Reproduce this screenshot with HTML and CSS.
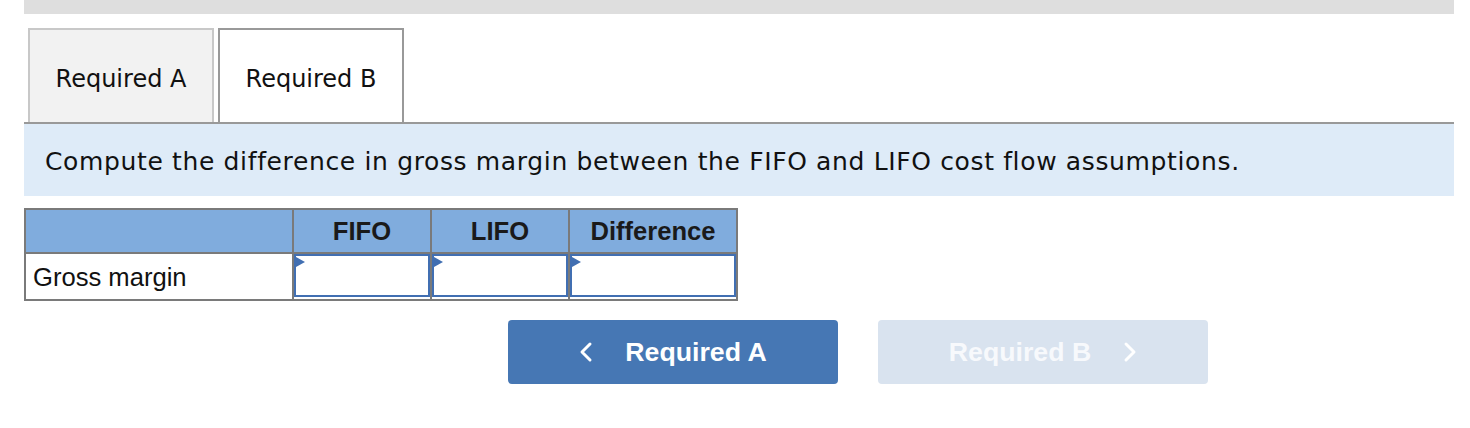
FILE: index.html
```html
<!DOCTYPE html>
<html lang="en">
<head>
<meta charset="utf-8">
<title>Required B</title>
<link rel="stylesheet" href="styles.css">
</head>
<body>
<div class="page">
  <div class="topbar"></div>

  <div class="tabs">
    <div class="tab">Required A</div>
    <div class="tab active">Required B</div>
  </div>

  <div class="prompt">Compute the difference in gross margin between the FIFO and LIFO cost flow assumptions.</div>

  <table class="grid">
    <colgroup>
      <col class="c-label">
      <col class="c-val">
      <col class="c-val">
      <col class="c-diff">
    </colgroup>
    <thead>
      <tr>
        <th></th>
        <th>FIFO</th>
        <th>LIFO</th>
        <th>Difference</th>
      </tr>
    </thead>
    <tbody>
      <tr>
        <td class="label">Gross margin</td>
        <td class="entry"><div class="field"></div></td>
        <td class="entry"><div class="field"></div></td>
        <td class="entry"><div class="field"></div></td>
      </tr>
    </tbody>
  </table>

  <div class="nav">
    <button class="btn primary" type="button">
      <svg class="chev" width="14" height="22" viewBox="0 0 14 22"><polyline points="11,3 3,11 11,19" fill="none" stroke="#fff" stroke-width="3" stroke-linecap="round" stroke-linejoin="round"/></svg>
      <span>Required A</span>
    </button>
    <button class="btn disabled" type="button">
      <span>Required B</span>
      <svg class="chev" width="14" height="22" viewBox="0 0 14 22"><polyline points="3,3 11,11 3,19" fill="none" stroke="#fff" stroke-width="3" stroke-linecap="round" stroke-linejoin="round"/></svg>
    </button>
  </div>
</div>
</body>
</html>
```

FILE: styles.css
```css
html, body {
  margin: 0;
  padding: 0;
  background: #fff;
}

.page {
  width: 1430px;
  margin-left: 24px;
  color: #111;
}

.topbar {
  height: 14px;
  background: #dedede;
}

/* tab strip */
.tabs {
  display: flex;
  gap: 4px;
  padding-left: 4px;
  margin-top: 14px;
  border-bottom: 2px solid #999;
}

.tab {
  box-sizing: border-box;
  width: 186px;
  height: 94px;
  display: flex;
  align-items: center;
  justify-content: center;
  padding-top: 5px;
  font-family: "DejaVu Sans", Verdana, sans-serif;
  font-size: 24px;
  color: #111;
  background: #f2f2f2;
  border: 2px solid #c8c8c8;
  border-bottom: none;
}

.tab.active {
  background: #fff;
  border-color: #999;
}

/* instruction panel */
.prompt {
  box-sizing: border-box;
  height: 72px;
  display: flex;
  align-items: center;
  padding-left: 21px;
  padding-top: 2px;
  background: #deebf8;
  font-family: "DejaVu Sans", Verdana, sans-serif;
  font-size: 25px;
  letter-spacing: 0.64px;
  color: #111;
}

/* answer table */
.grid {
  margin-top: 12px;
  border-collapse: collapse;
  table-layout: fixed;
  width: 712px;
  font-family: "Liberation Sans", Arial, sans-serif;
  font-size: 25.6px;
  color: #111;
}

.c-label { width: 268px; }
.c-val { width: 138px; }
.c-diff { width: 168px; }

.grid th,
.grid td {
  border: 2px solid #7a7a7a;
  padding: 0;
}

.grid th {
  height: 42px;
  background: #80acdd;
  font-weight: bold;
  text-align: center;
  color: #1a1a1a;
}

.grid td.label {
  height: 43px;
  padding-left: 7px;
  padding-top: 2px;
  text-align: left;
}

.grid td.entry {
  height: 43px;
  vertical-align: top;
}

.field {
  position: relative;
  box-sizing: border-box;
  height: 43px;
  border: 2px solid #416fb2;
  background: #fff;
}

/* little flag marking an editable cell */
.field::before {
  content: "";
  position: absolute;
  left: 0;
  top: 1px;
  border-top: 5px solid transparent;
  border-bottom: 5px solid transparent;
  border-left: 9px solid #416fb2;
}

/* navigation buttons */
.nav {
  display: flex;
  gap: 40px;
  margin-top: 19px;
  margin-left: 484px;
}

.btn {
  box-sizing: border-box;
  width: 330px;
  height: 64px;
  border: none;
  border-radius: 4px;
  display: flex;
  align-items: center;
  justify-content: center;
  gap: 32px;
  padding: 0;
  font-family: "Liberation Sans", Arial, sans-serif;
  font-size: 26.7px;
  font-weight: bold;
  color: #fff;
  cursor: pointer;
}

.btn.primary {
  background: #4677b4;
}

.btn.disabled {
  background: #d9e3ef;
  color: #f7f9fc;
  gap: 32px;
}

.chev {
  display: block;
}
```
